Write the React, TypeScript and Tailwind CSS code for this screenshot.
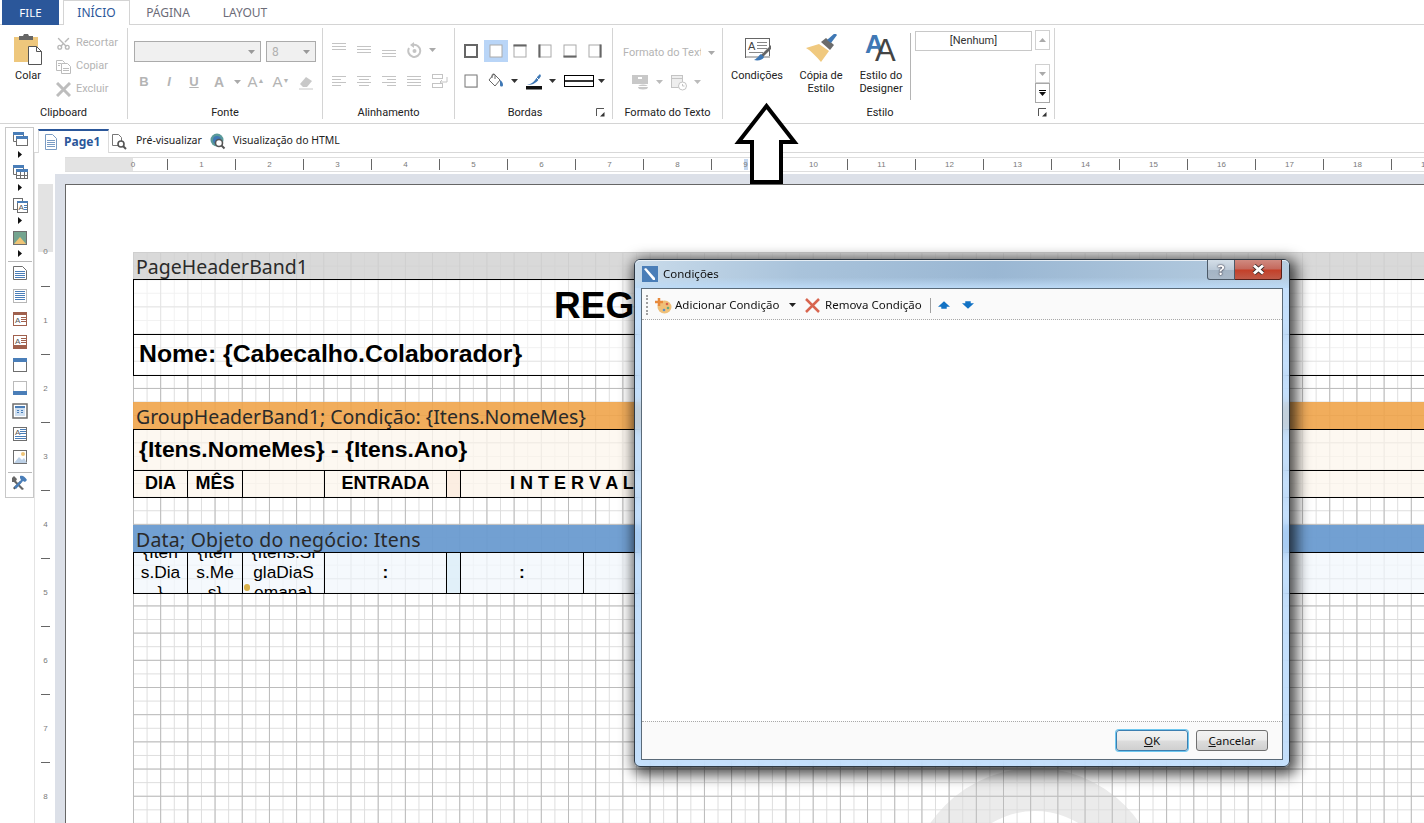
import React from 'react';
import { Scissors } from 'lucide-react';

const GRID =
  "bg-[linear-gradient(to_right,#bbbbbb_1px,transparent_1px),linear-gradient(to_bottom,#bbbbbb_1px,transparent_1px),linear-gradient(to_right,#dddddd_1px,transparent_1px),linear-gradient(to_bottom,#dddddd_1px,transparent_1px)] bg-[size:27.2px_27.2px,27.2px_27.2px,13.6px_13.6px,13.6px_13.6px]";

const Caret = ({ color = '#333' }: { color?: string }) => (
  <svg width="7" height="4" viewBox="0 0 7 4"><path d="M0 0h7L3.5 4z" fill={color} /></svg>
);

const Lines = ({ rows, color = '#c4c4c4' }: { rows: [number, number, number][]; color?: string }) => (
  <svg width="16" height="16" viewBox="0 0 16 16">
    {rows.map(([x, y, w], i) => <rect key={i} x={x} y={y} width={w} height="1" fill={color} />)}
  </svg>
);

const Cell = ({ w = 'w-[25px]', children }: { w?: string; children?: React.ReactNode }) => (
  <div className={`${w} h-[22px] flex items-center justify-center shrink-0`}>{children}</div>
);

// box with one darker side, used by the Bordas group
const BorderBox = ({ side }: { side?: 't' | 'l' | 'b' | 'r' | 'all' }) => (
  <svg width="14" height="14" viewBox="0 0 14 14">
    <rect x="1" y="1" width="12" height="12" fill={side === undefined ? '#fff' : 'none'} stroke={side === 'all' ? '#666' : '#aaa'} strokeWidth={side === 'all' ? 2 : 1} />
    {side === 't' && <rect x="0.5" y="0.5" width="13" height="2" fill="#666" />}
    {side === 'l' && <rect x="0.5" y="0.5" width="2" height="13" fill="#666" />}
    {side === 'b' && <rect x="0.5" y="11.5" width="13" height="2" fill="#666" />}
    {side === 'r' && <rect x="11.5" y="0.5" width="2" height="13" fill="#666" />}
  </svg>
);

const Launcher = () => (
  <svg width="9" height="9" viewBox="0 0 9 9">
    <path d="M0.5 8V0.5H8" fill="none" stroke="#555" />
    <path d="M8.5 4v4.5H4z" fill="#333" />
  </svg>
);

function Group({ w, label, launcher, children }: { w: string; label: string; launcher?: boolean; children: React.ReactNode }) {
  return (
    <div className={`${w} h-[91px] mt-[3px] border-r border-[#d4d4d4] flex flex-col shrink-0`}>
      <div className="h-[77px]">{children}</div>
      <div className="h-[14px] flex items-center text-[11px] leading-[14px] text-[#222]">
        <span className="flex-1 text-center pt-[1px]">{label}</span>
        {launcher && <span className="w-[17px] flex pl-[1px]"><Launcher /></span>}
      </div>
    </div>
  );
}

function BigButton({ icon, label, w }: { icon: React.ReactNode; label: React.ReactNode; w: string }) {
  return (
    <div className={`${w} flex flex-col items-center shrink-0 pt-[3px]`}>
      <div className="h-[38px] pb-[3px] flex items-center justify-center">{icon}</div>
      <div className="text-[11px] leading-[13px] text-center text-[#222]">{label}</div>
    </div>
  );
}

function Ribbon() {
  const dis = 'text-[#b4b4b4]';
  return (
    <div className="flex h-[99px] border-b border-[#d4d4d4] shrink-0 font-['Roboto',sans-serif]">
      <Group w="w-[128px]" label="Clipboard">
        <div className="flex">
          <BigButton
            w="w-[56px]"
            icon={
              <svg width="30" height="32" viewBox="0 0 30 32">
                <rect x="1" y="4" width="24" height="25" fill="#eec77c" />
                <path d="M6 7V3h4l1-2h4l1 2h4v4z" fill="#666" />
                <path d="M15.5 13.5h8l5 5v13h-13z" fill="#fff" stroke="#555" />
                <path d="M23.5 13.5v5h5" fill="none" stroke="#555" />
              </svg>
            }
            label="Colar"
          />
          <div className={`flex flex-col pt-[4px] text-[11px] ${dis}`}>
            <div className="h-[23px] flex items-center gap-[5px]">
              <Scissors size={15} strokeWidth={2.2} color="#b8b8b8" className="-rotate-90" />
              <span>Recortar</span>
            </div>
            <div className="h-[23px] flex items-center gap-[5px]">
              <svg width="15" height="15" viewBox="0 0 15 15" fill="#fff" stroke="#bcbcbc">
                <path d="M0.5 1.5h6l2 2v8h-8z" />
                <path d="M5.5 4.5h6l3 3v7h-9z" />
                <path d="M7 9.500h6M7 11.500h6M2 4.500h3M2 6.500h2" />
              </svg>
              <span>Copiar</span>
            </div>
            <div className="h-[23px] flex items-center gap-[5px]">
              <svg width="15" height="15" viewBox="0 0 15 15"><path d="M1 1l13 13M14 1L1 14" stroke="#bdbdbd" strokeWidth="3" /></svg>
              <span>Excluir</span>
            </div>
          </div>
        </div>
      </Group>

      <Group w="w-[195px]" label="Fonte">
        <div className="flex gap-[5px] pl-[6px] pt-[13px]">
          <div className="w-[127px] h-[21px] border border-[#ababab] bg-[#f0f0f0] flex items-center justify-end pr-[5px]"><Caret color="#999" /></div>
          <div className="w-[50px] h-[21px] border border-[#ababab] bg-[#f0f0f0] flex items-center justify-between pl-[5px] pr-[5px] text-[12px] text-[#b0b0b0]">8<Caret color="#999" /></div>
        </div>
        <div className={`flex pl-[3.5px] mt-[9px] font-['Liberation_Sans',sans-serif] ${dis}`}>
          <Cell><span className="font-bold text-[13px]">B</span></Cell>
          <Cell><span className="italic font-bold text-[13px]">I</span></Cell>
          <Cell><span className="font-bold text-[13px] underline">U</span></Cell>
          <Cell><span className="font-bold text-[14px]">A</span></Cell>
          <Cell w="w-[12px]"><Caret color="#aaa" /></Cell>
          <Cell><span className="text-[15px]">A<sup className="text-[7px]">▲</sup></span></Cell>
          <Cell><span className="text-[15px]">A<sup className="text-[7px]">▼</sup></span></Cell>
          <Cell>
            <svg width="16" height="16" viewBox="0 0 16 16">
              <path d="M2 10l6-7 6 4-5 6H5z" fill="#c8c8c8" />
              <path d="M1 15h14" stroke="#c8c8c8" />
            </svg>
          </Cell>
        </div>
      </Group>

      <Group w="w-[132px]" label="Alinhamento">
        <div className="flex pl-[3.5px] pt-[11px]">
          <Cell><Lines rows={[[1, 1, 14], [1, 4, 14], [1, 7, 14]]} /></Cell>
          <Cell><Lines rows={[[1, 4, 14], [1, 7, 14], [1, 10, 14]]} /></Cell>
          <Cell><Lines rows={[[1, 8, 14], [1, 11, 14], [1, 14, 14]]} /></Cell>
          <Cell>
            <svg width="16" height="16" viewBox="0 0 16 16" fill="none">
              <path d="M3 6a6 6 0 1 0 4-3" stroke="#c4c4c4" strokeWidth="2" />
              <path d="M8 0v6L4 3z" fill="#c4c4c4" />
              <circle cx="8.5" cy="9" r="2" fill="#c4c4c4" />
            </svg>
          </Cell>
          <Cell w="w-[12px]"><Caret color="#aaa" /></Cell>
        </div>
        <div className="flex pl-[3.5px] mt-[9px]">
          <Cell><Lines rows={[[1, 3, 14], [1, 6, 9], [1, 9, 14], [1, 12, 9]]} /></Cell>
          <Cell><Lines rows={[[1, 3, 14], [3, 6, 10], [1, 9, 14], [3, 12, 10]]} /></Cell>
          <Cell><Lines rows={[[1, 3, 14], [6, 6, 9], [1, 9, 14], [6, 12, 9]]} /></Cell>
          <Cell><Lines rows={[[1, 3, 14], [1, 6, 14], [1, 9, 14], [1, 12, 14]]} /></Cell>
          <Cell>
            <svg width="17" height="16" viewBox="0 0 17 16" fill="none" stroke="#c4c4c4">
              <rect x="1.5" y="1.5" width="10" height="4" />
              <rect x="1.5" y="10.5" width="10" height="4" />
              <path d="M16 4v5H9M11 7l-2 2 2 2" />
            </svg>
          </Cell>
        </div>
      </Group>

      <Group w="w-[158px]" label="Bordas" launcher>
        <div className="flex pl-[3.5px] pt-[12px]">
          <Cell><BorderBox side="all" /></Cell>
          <div className="w-[24px] h-[22px] bg-[#b9d5f7] flex items-center justify-center shrink-0"><BorderBox /></div>
          <Cell><BorderBox side="t" /></Cell>
          <Cell><BorderBox side="l" /></Cell>
          <Cell><BorderBox side="b" /></Cell>
          <Cell><BorderBox side="r" /></Cell>
        </div>
        <div className="flex items-center pl-[3.5px] mt-[8px]">
          <Cell>
            <svg width="15" height="15" viewBox="0 0 15 15">
              <rect x="2" y="2" width="12" height="12" fill="#ddd" />
              <rect x="1" y="1" width="12" height="12" fill="#fff" stroke="#777" />
            </svg>
          </Cell>
          <Cell>
            <svg width="16" height="16" viewBox="0 0 16 16">
              <path d="M6 1l6 6-5 6-6-6z" fill="#fff" stroke="#666" />
              <path d="M4 5V2.5a1.5 1.5 0 0 1 3 0V6" fill="none" stroke="#666" />
              <path d="M12 7c2 1 3 3 3 5 0 2-3 2-3 0z" fill="#3f78b5" />
            </svg>
          </Cell>
          <Cell w="w-[12px]"><Caret /></Cell>
          <Cell w="w-[27px]">
            <svg width="18" height="17" viewBox="0 0 18 17">
              <path d="M1 12c3 0 8-2 11-8l3-3 1 2-2 3c-3 5-8 6-13 6z" fill="#3f78b5" />
              <path d="M11 4l3 3" stroke="#fff" />
              <rect x="1" y="13" width="16" height="3.5" fill="#111" />
            </svg>
          </Cell>
          <Cell w="w-[10px]"><Caret /></Cell>
          <div className="ml-[6.5px] w-[30px] h-[12px] border border-black flex items-center shrink-0"><div className="w-full h-[2px] bg-[#333]" /></div>
          <Cell w="w-[14px]"><Caret /></Cell>
        </div>
      </Group>

      <Group w="w-[110px]" label="Formato do Texto">
        <div className="flex items-center pl-[10px] pt-[17px] h-[33px] text-[11px] text-[#b4b4b4]">
          <span className="w-[78px] overflow-hidden whitespace-nowrap">Formato do Texto</span>
          <Cell w="w-[20px]"><Caret color="#aaa" /></Cell>
        </div>
        <div className="flex items-center pl-[16px] mt-[10px]">
          <Cell w="w-[24px]">
            <svg width="18" height="16" viewBox="0 0 18 16">
              <rect x="0" y="1" width="16" height="9" fill="#c8c8c8" />
              <rect x="6" y="3" width="4" height="2" fill="#fff" />
              <ellipse cx="11" cy="13" rx="5" ry="2.5" fill="#c8c8c8" />
              <path d="M6 12.5h10" stroke="#fff" />
            </svg>
          </Cell>
          <Cell w="w-[12px]"><Caret color="#bbb" /></Cell>
          <Cell w="w-[28px]">
            <svg width="18" height="17" viewBox="0 0 18 17" fill="none" stroke="#c4c4c4">
              <rect x="1.5" y="1.5" width="11" height="12" fill="#eee" />
              <path d="M1 4.5h12" />
              <circle cx="12.5" cy="12" r="4" fill="#fff" />
              <path d="M12.5 10v2h2" />
            </svg>
          </Cell>
          <Cell w="w-[8px]"><Caret color="#bbb" /></Cell>
        </div>
      </Group>

      <Group w="w-[332px]" label="Estilo" launcher>
        <div className="flex pl-[2px] h-full">
          <BigButton
            w="w-[64px]"
            icon={
              <svg width="30" height="28" viewBox="0 0 30 28">
                <rect x="3.5" y="3.5" width="24" height="19" fill="#fff" stroke="#666" />
                <rect x="4" y="21" width="24" height="2" fill="#bbb" />
                <text x="6" y="15" fontSize="11" fontFamily="Liberation Sans, sans-serif" fill="#444">A</text>
                <path d="M15 7.500h10M15 10.500h10M15 13.500h10M7 17.500h14" stroke="#888" />
                <path d="M29 10L19 20l2 2 8-8z" fill="#666" />
                <path d="M19 19c-2 1-3 4-7 6 4 1 9 0 10-3z" fill="#3f78b5" />
              </svg>
            }
            label="Condições"
          />
          <BigButton
            w="w-[64px]"
            icon={
              <svg width="32" height="30" viewBox="0 0 32 30">
                <path d="M1 14l13-4 10 7-8 11C11 22 6 17 1 14z" fill="#f0c97f" />
                <path d="M16 8l5-4 8 7-4 5z" fill="#6b6b6b" />
                <path d="M22 6l8-7 2 2-6 8z" fill="#3f78b5" />
              </svg>
            }
            label={<>Cópia de<br />Estilo</>}
          />
          <BigButton
            w="w-[56px]"
            icon={
              <div className="relative w-[32px] h-[32px] font-['Liberation_Sans',sans-serif]">
                <span className="absolute left-0 top-[-2px] text-[26px] leading-[26px] font-bold text-[#3f78b5]">A</span>
                <span className="absolute left-[10px] top-[3px] text-[31px] leading-[30px] text-[#444]">A</span>
              </div>
            }
            label={<>Estilo do<br />Designer</>}
          />
          <div className="w-px h-[67px] mt-[5px] ml-[1px] bg-[#b4b4b4] shrink-0" />
          <div className="w-[117px] h-[20px] mt-[3px] ml-[4px] pt-[1px] border border-[#c8c8c8] flex items-center justify-center text-[11px] text-[#333] shrink-0">[Nenhum]</div>
          <div className="flex flex-col ml-[3px] mt-[2px] w-[15px]">
            <div className="h-[20px] border border-[#d0d0d0] flex items-center justify-center"><svg width="7" height="4" viewBox="0 0 7 4"><path d="M0 4h7L3.5 0z" fill="#aaa" /></svg></div>
            <div className="h-[19px] mt-[14px] border border-[#d0d0d0] flex items-center justify-center"><Caret color="#aaa" /></div>
            <div className="h-[20px] border border-[#a8a8a8] flex flex-col items-center justify-center gap-[1px]">
              <div className="w-[7px] h-px bg-black" />
              <Caret color="#111" />
            </div>
          </div>
        </div>
      </Group>
    </div>
  );
}

const B = '#4a7eb8';
const G = '#6e6e6e';
const R = '#a0604d';

const toolIcons: React.ReactNode[] = [
  <><path d="M1.5 1.5h10v9h-10z" fill="#fff" stroke={G} /><rect x="1" y="1" width="11" height="3" fill={B} /><rect x="4.5" y="5.5" width="11" height="9" fill="#fff" stroke={G} /><rect x="4" y="5" width="12" height="3" fill={B} /></>,
  <><path d="M1.5 1.5h10v9h-10z" fill="#fff" stroke={G} /><rect x="1" y="1" width="11" height="3" fill={B} /><rect x="4.5" y="5.5" width="11" height="9" fill="#fff" stroke={G} /><rect x="4" y="5" width="12" height="3" fill={B} /><path d="M8.500 8v6M12.500 8v6M5 11.500h10" stroke={G} /></>,
  <><rect x="1.5" y="1.5" width="9" height="11" fill="#fff" stroke={G} /><rect x="5.5" y="4.5" width="10" height="11" fill="#fff" stroke={G} /><rect x="5" y="4" width="11" height="2" fill={B} /><text x="6.5" y="13" fontSize="8" fontFamily="Liberation Sans, sans-serif" fill="#555">A</text><path d="M12 8.500h3M12 10.500h3M12 12.500h3" stroke={B} /></>,
  <><rect x="1.5" y="1.5" width="13" height="13" fill="#74a48f" stroke={G} /><path d="M2 14l6-7 6 7z" fill="#efc476" /></>,
  <><path d="M1.500 1.500h9l4 4v9h-13z" fill="#fff" stroke={G} /><path d="M3 6.500h10M3 8.500h10M3 10.500h10M3 12.500h10" stroke={B} /></>,
  <><rect x="1.5" y="1.5" width="13" height="13" fill="#fff" stroke={G} strokeDasharray="1 1" /><path d="M3 3.500h10M3 5.500h10M3 7.500h10M3 9.500h10M3 11.500h10" stroke={B} /></>,
  <><rect x="1.5" y="1.5" width="13" height="13" fill="#fff" stroke={R} /><rect x="1" y="1" width="14" height="3" fill={R} /><text x="3" y="12" fontSize="8" fontFamily="Liberation Sans, sans-serif" fill="#555">A</text><path d="M9 6.500h5M9 8.500h5M9 10.500h5" stroke={R} /></>,
  <><rect x="1.5" y="1.5" width="13" height="13" fill="#fff" stroke={R} /><rect x="1" y="11" width="14" height="4" fill={R} /><text x="3" y="10" fontSize="8" fontFamily="Liberation Sans, sans-serif" fill="#555">A</text><path d="M9 4.500h5M9 6.500h5M9 8.500h5" stroke={R} /></>,
  <><rect x="1.5" y="1.5" width="13" height="13" fill="#fff" stroke={G} /><rect x="1" y="1" width="14" height="4" fill={B} /></>,
  <><rect x="1.5" y="1.5" width="13" height="13" fill="#fff" stroke="#bbb" /><rect x="1" y="11" width="14" height="4" fill={B} /></>,
  <><rect x="1" y="1" width="14" height="14" fill="#fff" stroke={G} strokeWidth="1.5" /><rect x="3" y="3" width="10" height="10" fill="#cfe0f2" /><rect x="3" y="3" width="10" height="2" fill={B} /><path d="M5 7.500h2M9 7.500h2M5 9.500h2M9 9.500h2" stroke={B} /></>,
  <><rect x="1.5" y="1.5" width="13" height="13" fill="#fff" stroke={G} /><text x="3" y="9" fontSize="8" fontFamily="Liberation Sans, sans-serif" fill="#555">A</text><path d="M8 3.500h6M8 5.500h6M8 7.500h6M3 10.500h11M3 12.500h11" stroke={B} /></>,
  <><rect x="1.5" y="1.5" width="13" height="13" fill="#fff" stroke={G} /><circle cx="11" cy="5" r="2" fill="#efc476" /><path d="M2 14l5-6 3 3 2-2 3 5z" fill="#bcd0e6" /></>,
];

function Toolbox() {
  return (
    <div className="ml-[5px] mt-[3px] w-[29px] h-[371px] border border-[#c8c8c8] flex flex-col items-center pt-[3px] shrink-0">
      {[0, 1, 2, 3].map((i) => (
        <div key={i} className={`flex flex-col items-center ${i === 3 ? 'h-[30px]' : 'h-[33px]'}`}>
          <svg width="16" height="16" viewBox="0 0 16 16">{toolIcons[i]}</svg>
          <div className="h-[14px] flex items-center">
            <svg width="4" height="7" viewBox="0 0 4 7"><path d="M0 0l4 3.5L0 7z" fill="#111" /></svg>
          </div>
        </div>
      ))}
      <div className="w-[24px] h-px bg-[#b8b8b8] mt-[1px] mb-[3px] shrink-0" />
      <div className="flex flex-col gap-[7px]">
        {toolIcons.slice(4).map((ic, i) => <svg key={i} width="16" height="16" viewBox="0 0 16 16">{ic}</svg>)}
      </div>
      <div className="w-[24px] h-px bg-[#b8b8b8] mt-[7px] mb-[2px] shrink-0" />
      <svg width="17" height="16" viewBox="0 0 17 16">
        <path d="M2 13l7-7 1.500 1.500-7 7z" fill="#555" />
        <path d="M1 3l2-2 3 3-1 2 8 8-2 1-8-8-2 0z" fill="#666" />
        <path d="M9 1c3-1 5 1 7 4l-2 2-2-1-7 8-2-2 7-7-1-2z" fill={B} />
      </svg>
    </div>
  );
}

function TopRuler() {
  const units = Array.from({ length: 20 }, (_, i) => i);
  return (
    <div className="ml-[30px] h-[15px] mt-[4px] flex pl-[34px] overflow-hidden border-y border-[#dedede] bg-[linear-gradient(to_right,#e3e3e3_68px,#ffffff_68px)] shrink-0">
      {units.map((n) => (
        <div key={n} className={`relative w-[68px] shrink-0 flex items-center justify-center text-[8px] text-[#7a7a7a] ${n === 0 ? '' : 'border-l border-[#666]'} my-[1px]`}>
          {n === 9 && <span className="absolute left-[32px] top-0 w-[4px] h-full bg-[#c5d8f0]" />}
          <span className="relative">{n}</span>
        </div>
      ))}
    </div>
  );
}

function LeftRuler() {
  const units = Array.from({ length: 10 }, (_, i) => i);
  return (
    <div className="ml-[3px] w-[15px] mt-[10px] mr-[2px] pt-[34px] overflow-hidden bg-[linear-gradient(to_bottom,#e3e3e3_68px,#ffffff_68px)] shrink-0 relative">
      {units.map((n) => (
        <div key={n} className="h-[68px] flex flex-col items-center relative">
          {n > 0 && <div className="w-[9px] h-px bg-[#666]" />}
          <span className="flex-1 flex items-center text-[8px] text-[#7a7a7a]">{n}</span>
        </div>
      ))}
    </div>
  );
}

const bandText = "text-[19.5px] leading-[27px] pt-[1px] pl-[3px] whitespace-nowrap text-[#2a2a2a] font-['Noto_Sans',sans-serif]";
const LINE = 'border-t border-black';

function Sheet() {
  return (
    <div className="flex-1 min-w-0 bg-[#dce0e8] pl-[10px] pt-[10px] overflow-hidden">
      <div className="relative h-full bg-white border-t border-l border-[#666] overflow-hidden">
        {/* watermark sits under the grid */}
        <div className="absolute left-[842px] top-[583px] w-[254px] h-[254px] rounded-full border-[43px] border-[#ebebeb]" />
        <div className="relative ml-[67px] mt-[67px] h-full font-['Liberation_Sans',sans-serif] text-black">
          <div className={`absolute inset-0 ${GRID}`} />
          <div className="relative">
            <div className="h-[27px] bg-[#d2d2d2]/85"><div className={bandText}>PageHeaderBand1</div></div>
            <div className={`h-[55px] ${LINE} border-l bg-white/60 pl-[420px] pb-[3px] flex items-center font-bold text-[37px]`}>REG</div>
            <div className={`h-[41px] ${LINE} border-l bg-white/60 pl-[5px] pb-[3px] flex items-center font-bold text-[24.8px] whitespace-nowrap`}>Nome: {'{Cabecalho.Colaborador}'}</div>
            <div className={`h-[27px] ${LINE}`} />
            <div className="h-[27px] bg-[#f0a44a]/90"><div className={bandText}>GroupHeaderBand1; Condição: {'{Itens.NomeMes}'}</div></div>
            <div className={`h-[41px] ${LINE} border-l bg-[#fdf6ee]/80 pl-[5px] pb-[2px] flex items-center font-bold text-[22.9px] whitespace-nowrap`}>{'{Itens.NomeMes} - {Itens.Ano}'}</div>
            <div className={`h-[27px] ${LINE} bg-[#fdf6ee]/80 flex font-bold text-[18px] leading-[24px]`}>
              <div className="w-[55px] border-x border-black text-center shrink-0">DIA</div>
              <div className="w-[55px] border-r border-black text-center shrink-0">MÊS</div>
              <div className="w-[82px] border-r border-black shrink-0" />
              <div className="w-[122px] border-r border-black text-center shrink-0">ENTRADA</div>
              <div className="w-[14px] border-r border-black bg-[#fbeadb]/70 shrink-0" />
              <div className="pl-[49px] whitespace-nowrap">I N T E R V A L</div>
            </div>
            <div className={`h-[28px] ${LINE}`} />
            <div className="h-[27px] bg-[#6a9bd0]/95"><div className={`${bandText} tracking-[0.2px]`}>Data; Objeto do negócio: Itens</div></div>
            <div className={`h-[41px] ${LINE} bg-[#f2f8fd]/80 flex text-[17.33px] leading-[20px]`}>
              <div className="w-[55px] border-x border-black overflow-hidden flex items-center justify-center text-center pb-[2px] shrink-0"><span>{'{Iten'}<br />s.Dia<br />{'}'}</span></div>
              <div className="w-[55px] border-r border-black overflow-hidden flex items-center justify-center text-center pb-[2px] shrink-0"><span>{'{Iten'}<br />s.Me<br />{'s}'}</span></div>
              <div className="relative w-[82px] border-r border-black overflow-hidden flex items-center justify-center text-center pb-[2px] shrink-0">
                <span>{'{Itens.Si'}<br />glaDiaS<br />{'emana}'}</span>
                <span className="absolute left-[1px] bottom-[2px] w-[6px] h-[7px] rounded-sm bg-[#d8b04a]" />
              </div>
              <div className="w-[122px] border-r border-black flex items-center justify-center font-bold pb-[2px] shrink-0">:</div>
              <div className="w-[14px] border-r border-black bg-[#dcedf8]/80 shrink-0" />
              <div className="w-[123px] border-r border-black flex items-center justify-center font-bold pb-[2px] shrink-0">:</div>
            </div>
            <div className={LINE} />
          </div>
        </div>
      </div>
    </div>
  );
}

function Dialog() {
  return (
    <div className="absolute left-[634px] top-[259px] w-[656px] h-[508px] rounded-[6px] border border-[#2f3a45] bg-[#b6d8fb]/80 backdrop-blur-[5px] shadow-[3px_4px_14px_4px_rgba(0,0,0,0.7)] flex flex-col font-['Noto_Sans',sans-serif] z-20">
      <div className="h-[28px] rounded-t-[5px] flex shrink-0 pl-[7px] pr-[7px] bg-[linear-gradient(to_bottom,rgba(255,255,255,0)_62%,#bcdaf6_100%),linear-gradient(to_right,#c9dbea_0%,#a9c3db_25%,#9ab7d3_55%,#b7cde0_100%)] shadow-[inset_0_1px_0_rgba(255,255,255,0.7)]">
        <div className="flex items-center gap-[5px] flex-1">
          <svg width="16" height="16" viewBox="0 0 16 16">
            <rect width="16" height="16" fill="#4a7eb8" />
            <path d="M2 3l2-1 9 10v2h-2z" fill="#fff" />
          </svg>
          <span className="text-[11.5px] text-[#111]">Condições</span>
        </div>
        <div className="w-[28px] h-[20px] rounded-bl-[3px] border border-t-0 border-[#4c5a68] bg-[linear-gradient(to_bottom,#d4dee7_0%,#bccad8_50%,#a4b4c4_52%,#aab9c8_100%)] flex items-center justify-center font-bold text-[14px] text-white [text-shadow:0_0_2px_#223,0_0_1px_#223] shrink-0">?</div>
        <div className="w-[47px] h-[20px] rounded-br-[3px] border border-t-0 border-l-0 border-[#5a1f18] bg-[linear-gradient(to_bottom,#d08a80_0%,#c4685c_48%,#c43f28_52%,#bf5a48_100%)] flex items-center justify-center shrink-0">
          <svg width="13" height="11" viewBox="0 0 13 11">
            <path d="M2 1.500l9 8M11 1.500l-9 8" stroke="#3a2a2a" strokeWidth="4.500" />
            <path d="M2 1.500l9 8M11 1.500l-9 8" stroke="#fff" strokeWidth="3" />
          </svg>
        </div>
      </div>
      <div className="flex-1 mx-[6px] mb-[6px] border border-[#5a6a78] bg-white flex flex-col min-h-0">
        <div className="h-[31px] pt-[2px] bg-[#fafafa] border-b border-dotted border-[#a8a8a8] flex items-center text-[11.5px] text-[#111] shrink-0">
          <div className="ml-[4px] w-[2px] h-[20px] border-l-2 border-dotted border-[#a0a0a0] shrink-0" />
          <svg className="ml-[7px]" width="17" height="17" viewBox="0 0 17 17">
            <ellipse cx="9.500" cy="10" rx="7" ry="6.500" fill="#f0c078" />
            <circle cx="9" cy="13" r="1.300" fill="#5a8fc4" />
            <circle cx="13" cy="11" r="1.300" fill="#6aa87a" />
            <circle cx="12" cy="7" r="1.300" fill="#d8604a" />
            <path d="M0 5h8M4 1v8" stroke="#e88a3c" strokeWidth="2.500" />
          </svg>
          <span className="ml-[3px] w-[105px] whitespace-nowrap">Adicionar Condição</span>
          <span className="ml-[9px] flex"><Caret color="#222" /></span>
          <svg className="ml-[9px]" width="15" height="15" viewBox="0 0 15 15"><path d="M1 1l13 13M14 1L1 14" stroke="#d8654f" strokeWidth="2.500" /></svg>
          <span className="ml-[5px] w-[97px] whitespace-nowrap">Remova Condição</span>
          <div className="ml-[8px] w-px h-[15px] bg-[#a0a0a0]" />
          <svg className="ml-[7px]" width="12" height="8" viewBox="0 0 11 7"><path d="M5.500 0L11 5H8v2H3V5H0z" fill="#1272c4" /></svg>
          <svg className="ml-[12px]" width="12" height="8" viewBox="0 0 11 7"><path d="M3 0h5v2h3L5.500 7 0 2h3z" fill="#1272c4" /></svg>
        </div>
        <div className="flex-1 bg-white" />
        <div className="h-[38px] bg-[#fafafa] border-t border-dotted border-[#a8a8a8] flex justify-end items-start pt-[8px] pr-[14px] gap-[8px] text-[11.5px] text-[#111] shrink-0">
          <button className="w-[72px] h-[21px] rounded-[3px] border border-[#3c7fb1] shadow-[0_0_0_1px_#6fc8f0] bg-[linear-gradient(to_bottom,#f2f2f2_0%,#ebebeb_48%,#dddddd_52%,#cfcfcf_100%)] leading-[18px]"><u>O</u>K</button>
          <button className="w-[72px] h-[21px] rounded-[3px] border border-[#707070] bg-[linear-gradient(to_bottom,#f2f2f2_0%,#ebebeb_48%,#dddddd_52%,#cfcfcf_100%)] leading-[18px]"><u>C</u>ancelar</button>
        </div>
      </div>
    </div>
  );
}

export default function App() {
  return (
    <div className="relative w-[1424px] h-[823px] overflow-hidden bg-white flex flex-col font-['Noto_Sans',sans-serif]">
      {/* tabs */}
      <div className="h-[25px] flex border-b border-[#d4d4d4] pl-[2px] text-[12px] text-[#6c6c78] shrink-0">
        <div className="w-[57px] h-[25px] bg-[#2b579a] text-white text-[11.5px] flex items-center justify-center">FILE</div>
        <div className="ml-[4px] w-[67px] h-[25px] bg-white border border-b-0 border-[#d4d4d4] text-[#2b579a] flex items-center justify-center">INÍCIO</div>
        <div className="w-[76px] flex items-center justify-center pt-[1px]">PÁGINA</div>
        <div className="w-[78px] flex items-center justify-center pt-[1px]">LAYOUT</div>
      </div>
      <Ribbon />
      <div className="flex flex-1 min-h-0">
        <Toolbox />
        <div className="flex-1 min-w-0 flex flex-col">
          <div className="h-[29px] pt-[5px] pl-[4px] border-b border-[#d8d8d8] flex text-[10.5px] text-[#222] shrink-0">
            <div className="w-[71px] h-[24px] -mb-px bg-white border-t-2 border-t-[#2b579a] border-x border-[#dcdcdc] flex items-center gap-[6px] pl-[5px]">
              <svg width="14" height="16" viewBox="0 0 14 16" fill="#fff" stroke="#7a9cc4">
                <path d="M1.500 0.500h7l4 4v11h-11z" />
                <path d="M3 6.500h8M3 8.500h8M3 10.500h8M3 12.500h8" />
              </svg>
              <span className="font-bold text-[12px] text-[#2b579a]">Page1</span>
            </div>
            <div className="flex items-center pl-[2px] pt-[1px] h-[23px]">
              <svg width="16" height="17" viewBox="0 0 16 17" fill="none">
                <path d="M1.500 1.500h6l3 3v8h-9z" stroke="#777" fill="#fff" />
                <circle cx="10" cy="11" r="3" stroke="#555" strokeWidth="1.600" fill="#fff" />
                <path d="M12 13l3 3" stroke="#555" strokeWidth="2" />
              </svg>
              <span className="ml-[9px] w-[63px] whitespace-nowrap">Pré-visualizar</span>
            </div>
            <div className="flex items-center ml-[11px] pt-[1px] h-[23px]">
              <svg width="16" height="17" viewBox="0 0 16 17" fill="none">
                <circle cx="7" cy="7" r="6.500" fill="#5a9a9a" />
                <circle cx="7" cy="7" r="4" fill="#3f78b5" />
                <circle cx="9" cy="10" r="3.500" stroke="#555" strokeWidth="1.600" fill="#fff" />
                <path d="M11.500 12.500l3 3" stroke="#555" strokeWidth="2" />
              </svg>
              <span className="ml-[7px]">Visualização do HTML</span>
            </div>
          </div>
          <div className="flex-1 min-h-0 flex flex-col border-l border-[#e4e4e4]">
            <div className="font-['Liberation_Sans',sans-serif] flex flex-col shrink-0">
              <TopRuler />
            </div>
            <div className="flex flex-1 min-h-0 mt-[2px] font-['Liberation_Sans',sans-serif]">
              <LeftRuler />
              <Sheet />
            </div>
          </div>
        </div>
      </div>
      <Dialog />
      {/* arrow drawn on top of the screenshot */}
      <svg className="absolute left-[733px] top-[100px] z-30" width="68" height="88" viewBox="733 100 68 88">
        <path d="M766.500 106L794.500 142H781V182H752V142H738.500z" fill="#fff" stroke="#000" strokeWidth="4" />
      </svg>
    </div>
  );
}
